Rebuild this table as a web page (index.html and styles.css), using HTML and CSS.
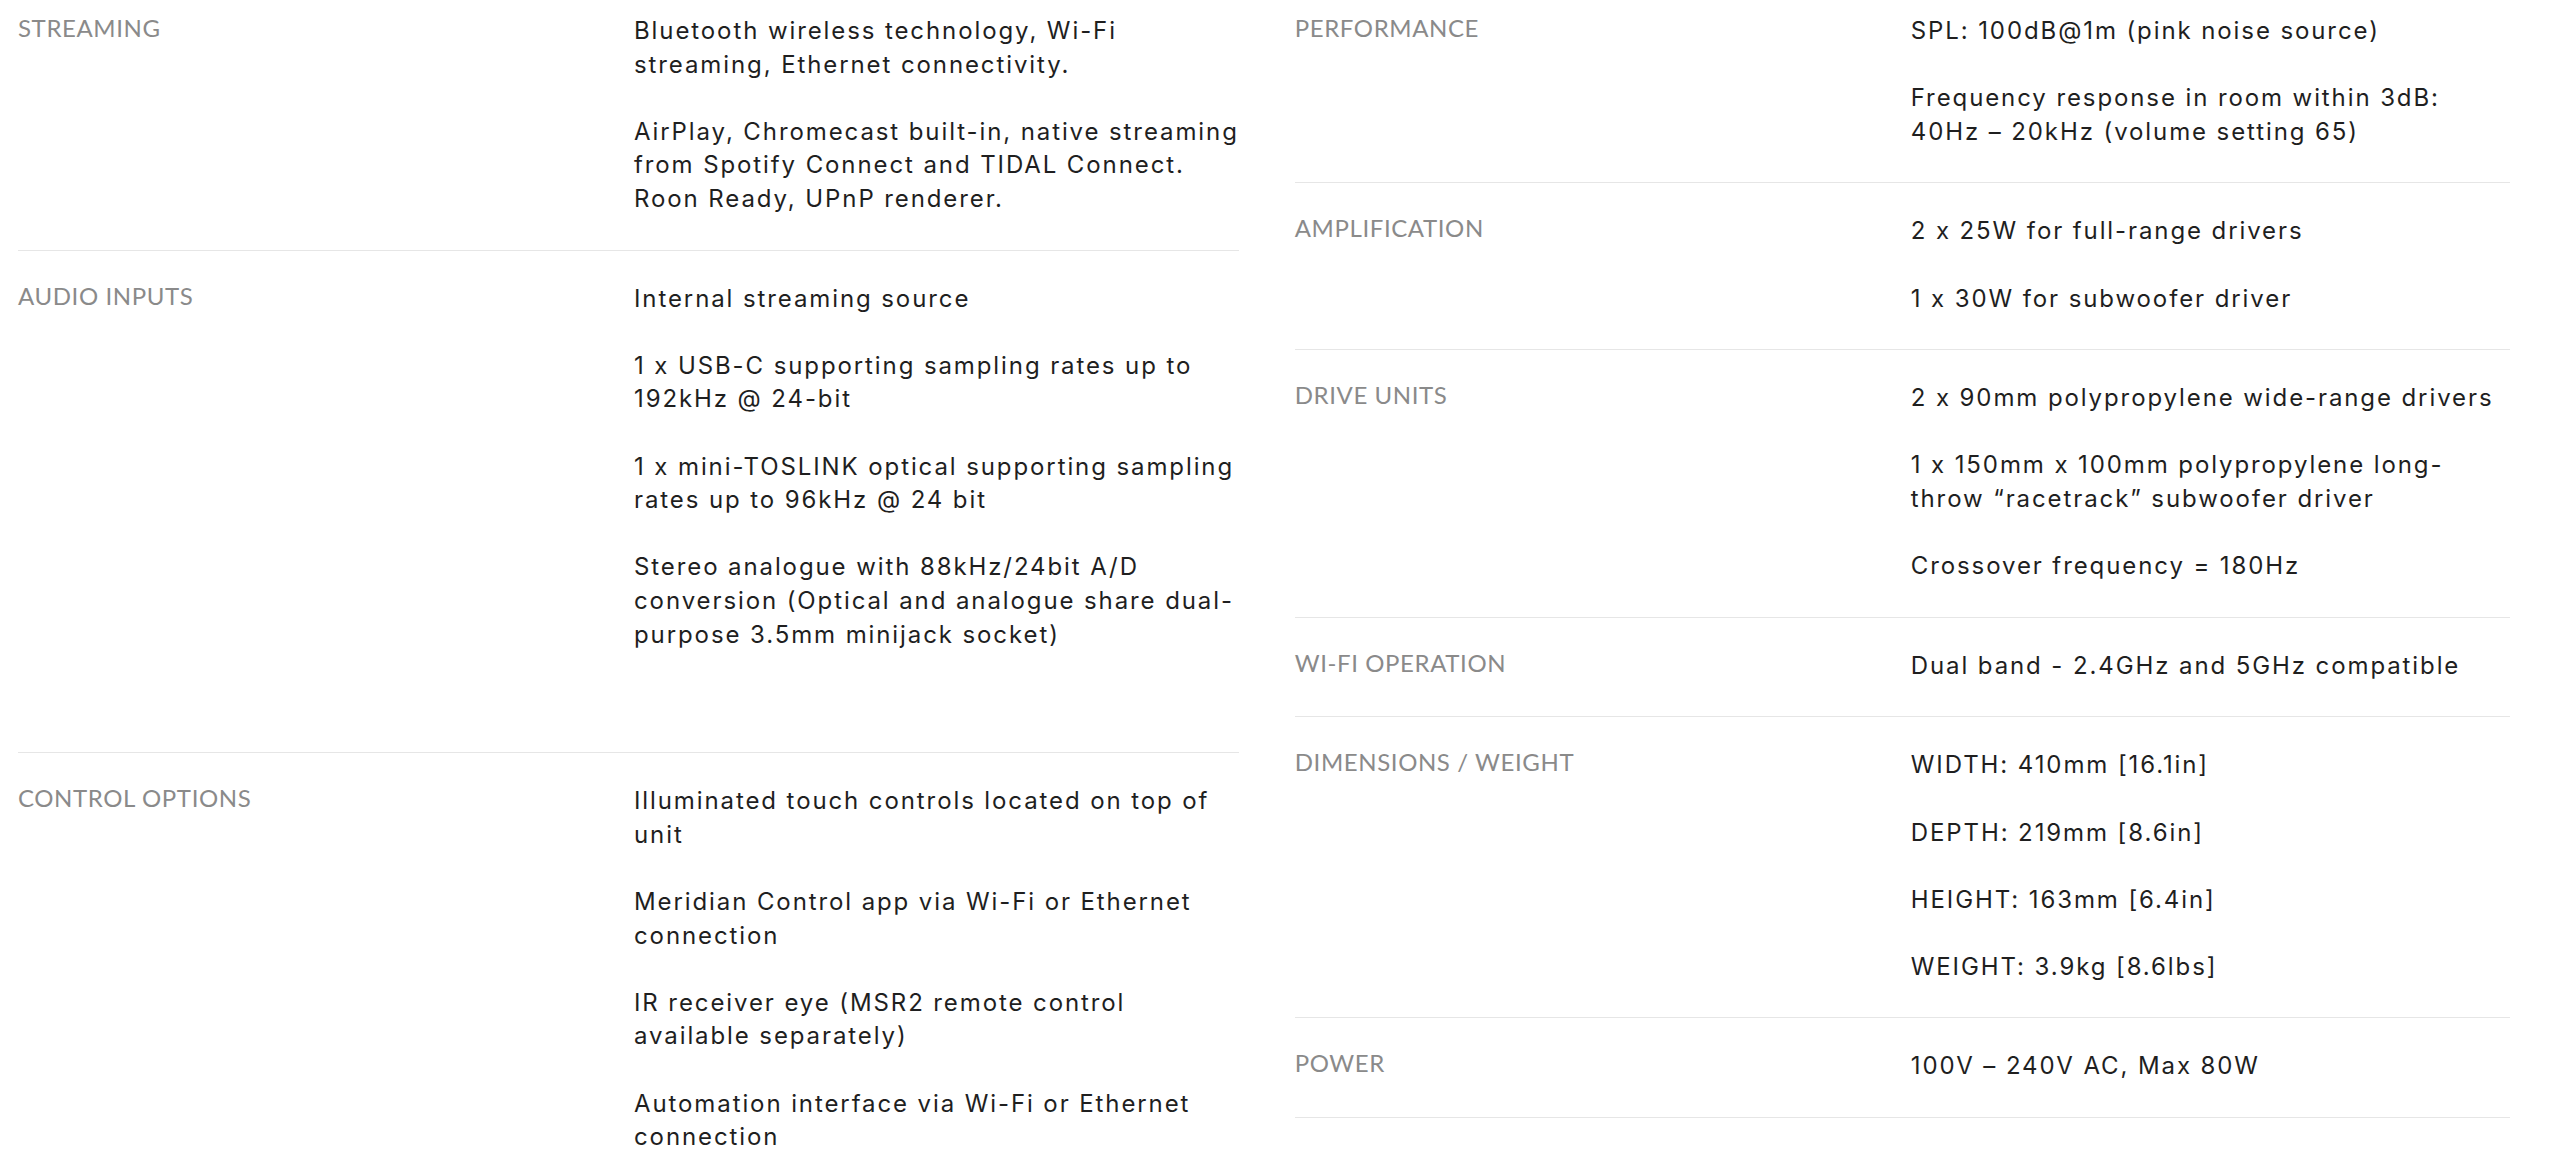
FILE: index.html
```html
<!DOCTYPE html>
<html lang="en">
<head>
<meta charset="utf-8">
<title>Specifications</title>
<link rel="stylesheet" href="styles.css">
</head>
<body>
<main class="specs">
  <section class="spec-col">
    <div class="row">
      <h3 class="label">STREAMING</h3>
      <div class="value">
        <p>Bluetooth wireless technology, Wi-Fi<br>streaming, Ethernet connectivity.</p>
        <p>AirPlay, Chromecast built-in, native streaming<br>from Spotify Connect and TIDAL Connect.<br>Roon Ready, UPnP renderer.</p>
      </div>
    </div>
    <div class="row">
      <h3 class="label">AUDIO INPUTS</h3>
      <div class="value">
        <p>Internal streaming source</p>
        <p>1 x USB-C supporting sampling rates up to<br>192kHz @ 24-bit</p>
        <p>1 x mini-TOSLINK optical supporting sampling<br>rates up to 96kHz @ 24 bit</p>
        <p>Stereo analogue with 88kHz/24bit A/D<br>conversion (Optical and analogue share dual-<br>purpose 3.5mm minijack socket)</p>
        <p>&nbsp;</p>
      </div>
    </div>
    <div class="row">
      <h3 class="label">CONTROL OPTIONS</h3>
      <div class="value">
        <p>Illuminated touch controls located on top of<br>unit</p>
        <p>Meridian Control app via Wi-Fi or Ethernet<br>connection</p>
        <p>IR receiver eye (MSR2 remote control<br>available separately)</p>
        <p>Automation interface via Wi-Fi or Ethernet<br>connection</p>
      </div>
    </div>
  </section>
  <section class="spec-col">
    <div class="row">
      <h3 class="label">PERFORMANCE</h3>
      <div class="value">
        <p>SPL: 100dB@1m (pink noise source)</p>
        <p>Frequency response in room within 3dB:<br>40Hz – 20kHz (volume setting 65)</p>
      </div>
    </div>
    <div class="row">
      <h3 class="label">AMPLIFICATION</h3>
      <div class="value">
        <p>2 x 25W for full-range drivers</p>
        <p>1 x 30W for subwoofer driver</p>
      </div>
    </div>
    <div class="row">
      <h3 class="label">DRIVE UNITS</h3>
      <div class="value">
        <p>2 x 90mm polypropylene wide-range drivers</p>
        <p>1 x 150mm x 100mm polypropylene long-<br>throw “racetrack” subwoofer driver</p>
        <p>Crossover frequency = 180Hz</p>
      </div>
    </div>
    <div class="row">
      <h3 class="label">WI-FI OPERATION</h3>
      <div class="value">
        <p>Dual band - 2.4GHz and 5GHz compatible</p>
      </div>
    </div>
    <div class="row">
      <h3 class="label">DIMENSIONS / WEIGHT</h3>
      <div class="value">
        <p>WIDTH: 410mm [16.1in]</p>
        <p>DEPTH: 219mm [8.6in]</p>
        <p>HEIGHT: 163mm [6.4in]</p>
        <p>WEIGHT: 3.9kg [8.6lbs]</p>
      </div>
    </div>
    <div class="row row-last">
      <h3 class="label">POWER</h3>
      <div class="value">
        <p>100V – 240V AC, Max 80W</p>
      </div>
    </div>
  </section>
</main>
</body>
</html>
```
FILE: styles.css
```css
html, body {
  margin: 0;
  padding: 0;
  background: #ffffff;
}

.specs {
  display: grid;
  grid-template-columns: 1fr 1fr;
  column-gap: 56px;
  padding: 0 50px 0 18px;
  align-items: start;
}

.spec-col {
  display: flex;
  flex-direction: column;
}

.row {
  display: grid;
  grid-template-columns: 616px 1fr;
  border-top: 1px solid #e6e6e6;
  padding: 31px 0 34px;
}

.row:first-child {
  border-top: 0;
  padding-top: 14px;
}

.row-last {
  border-bottom: 1px solid #e6e6e6;
}

.label {
  margin: 0;
  font-family: "Lato", "Open Sans", sans-serif;
  font-weight: 400;
  font-size: 24px;
  line-height: 28px;
  letter-spacing: 0.6px;
  color: #8a8a8a;
}

.value {
  font-family: "Inter", "Liberation Sans", sans-serif;
  font-weight: 400;
  font-size: 24px;
  line-height: 33.6px;
  letter-spacing: 1.9px;
  color: #1f1f1f;
  white-space: nowrap;
}

.value p {
  margin: 0 0 33.6px;
}

.value p:last-child {
  margin-bottom: 0;
}
```
